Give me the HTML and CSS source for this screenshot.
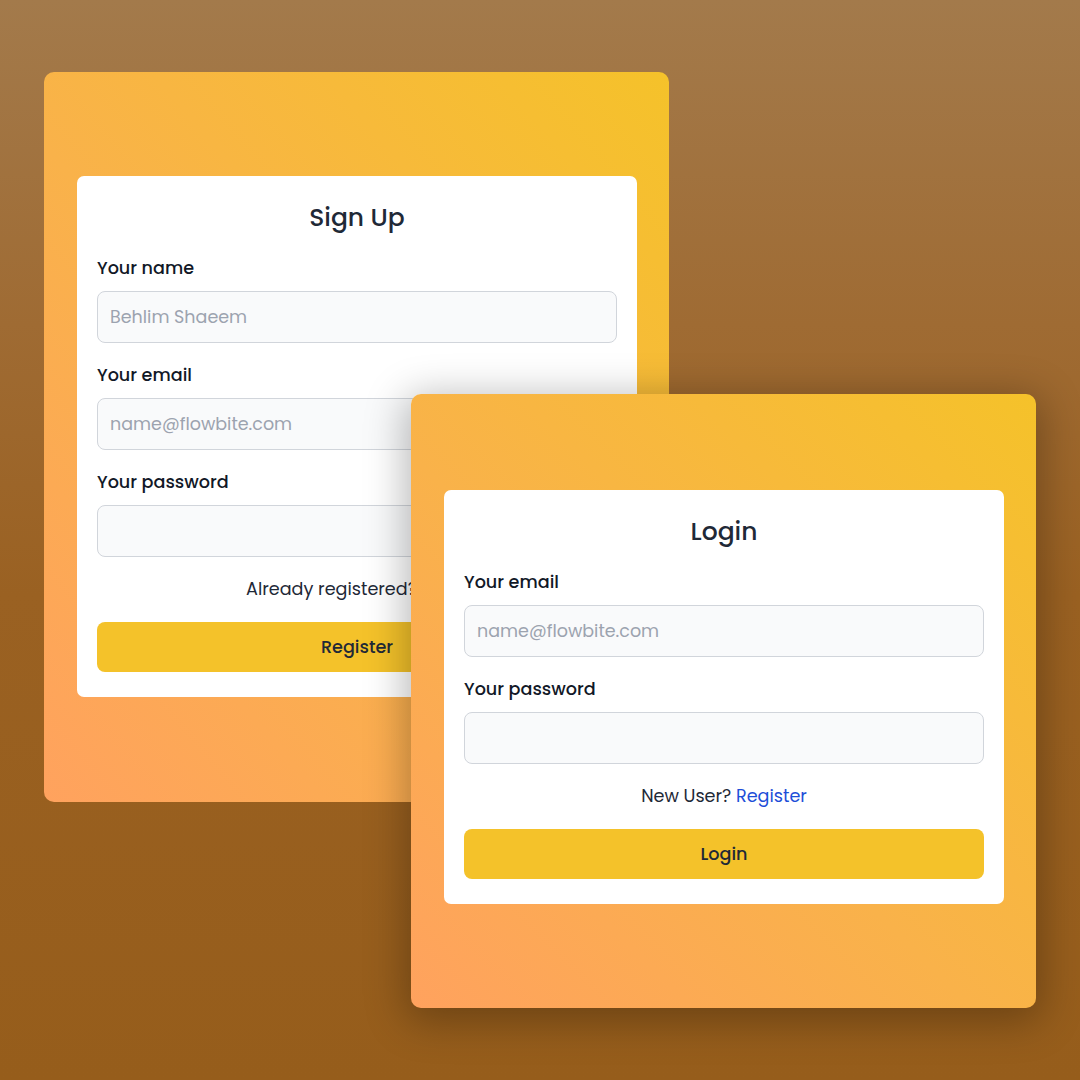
FILE: index.html
```html
<!DOCTYPE html>
<html lang="en">
<head>
<meta charset="utf-8">
<title>Sign Up / Login</title>
<link rel="stylesheet" href="styles.css">
</head>
<body>
<div class="stage">
  <section class="frame frame-signup">
    <form class="panel">
      <h1 class="title">Sign Up</h1>
      <div class="field">
        <label class="label">Your name</label>
        <input class="input" type="text" placeholder="Behlim Shaeem">
      </div>
      <div class="field">
        <label class="label">Your email</label>
        <input class="input" type="email" placeholder="name@flowbite.com">
      </div>
      <div class="field">
        <label class="label">Your password</label>
        <input class="input" type="password">
      </div>
      <p class="note">Already registered? <a class="link" href="#">Login</a></p>
      <button class="btn" type="button">Register</button>
    </form>
  </section>
  <section class="frame frame-login">
    <form class="panel">
      <h1 class="title">Login</h1>
      <div class="field">
        <label class="label">Your email</label>
        <input class="input" type="email" placeholder="name@flowbite.com">
      </div>
      <div class="field">
        <label class="label">Your password</label>
        <input class="input" type="password">
      </div>
      <p class="note">New User? <a class="link" href="#">Register</a></p>
      <button class="btn" type="button">Login</button>
    </form>
  </section>
</div>
</body>
</html>
```

FILE: styles.css
```css
html, body {
  margin: 0;
  padding: 0;
}
body {
  width: 1080px;
  height: 1080px;
  overflow: hidden;
  font-family: "Poppins", "DejaVu Sans", "Open Sans", sans-serif;
  background: linear-gradient(to bottom, #a37a4b 0%, #9f6b33 30%, #9a6122 55%, #965d1b 100%);
}
.stage {
  position: relative;
  width: 1080px;
  height: 1080px;
}
.frame {
  position: absolute;
  width: 625px;
  box-sizing: border-box;
  padding: 0 32px 0 33px;
  border-radius: 10px;
  display: flex;
  align-items: center;
  background: linear-gradient(to top right, #ffa25e 0%, #f9b24a 45%, #f5c22a 100%);
}
.frame-signup {
  left: 44px;
  top: 72px;
  height: 730px;
  padding-bottom: 1px;
}
.frame-login {
  left: 411px;
  top: 394px;
  height: 614px;
  padding-bottom: 8px;
  box-shadow: 0 8px 40px 6px rgba(0, 0, 0, 0.28);
}
.panel {
  width: 100%;
  box-sizing: border-box;
  background: #ffffff;
  border-radius: 7px;
  padding: 25px 20px 25px;
  display: flex;
  flex-direction: column;
}
.title {
  margin: 0 0 21px;
  font-size: 25px;
  line-height: 34px;
  font-weight: 500;
  color: #1f2937;
  text-align: center;
}
.field {
  display: flex;
  flex-direction: column;
  margin-bottom: 20px;
}
.label {
  font-size: 17.6px;
  line-height: 24px;
  font-weight: 500;
  color: #111827;
  margin-bottom: 11px;
}
.input {
  height: 52px;
  box-sizing: border-box;
  border: 1px solid #d1d5db;
  border-radius: 8px;
  background: #f9fafb;
  padding: 0 12px;
  font-family: inherit;
  font-size: 17.5px;
  color: #111827;
  outline: none;
}
.input::placeholder {
  color: #9ca3af;
}
.note {
  margin: 0 0 21px;
  font-size: 17.6px;
  line-height: 24px;
  color: #1f2937;
  text-align: center;
}
.link {
  color: #1d4ed8;
  text-decoration: none;
}
.btn {
  height: 50px;
  border: none;
  border-radius: 8px;
  background: #f4c22a;
  font-family: inherit;
  font-size: 17.6px;
  font-weight: 500;
  color: #1f2937;
  cursor: pointer;
}
```
